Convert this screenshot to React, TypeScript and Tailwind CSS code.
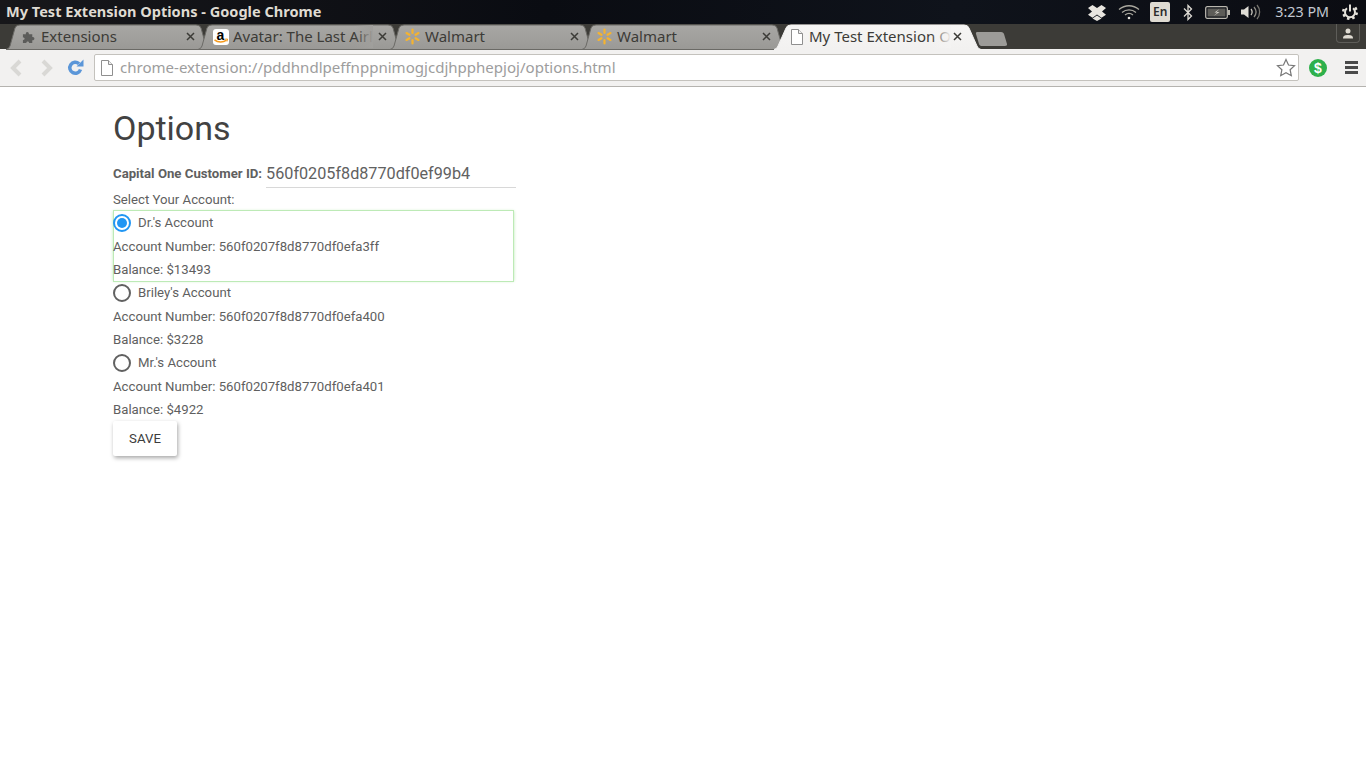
import React from "react";

const ui = { fontFamily: '"Noto Sans", "Open Sans", sans-serif' };
const rb = { fontFamily: 'Roboto, sans-serif' };

function Spark() {
  return (
    <svg width="17" height="17" viewBox="0 0 17 17" className="shrink-0">
      <g fill="#f5b32f">
        {[0, 60, 120, 180, 240, 300].map((a) => (
          <rect key={a} x="7.4" y="0.5" width="2.2" height="5.6" rx="1.1" transform={`rotate(${a} 8.5 8.5)`} />
        ))}
      </g>
    </svg>
  );
}

function Puzzle() {
  return (
    <svg width="14" height="14" viewBox="0 0 15 15" className="shrink-0">
      <path d="M1 4.500h3.200c-.9-2.800 3.400-3.600 3.200 0H11v3c2.700-.8 3.400 3.600 0 3.400V14H7.600c.3-2.400-3.200-2.400-3 0H1v-3.400c2.300.4 2.500-2.900 0-2.600z" fill="#5c5c5a" />
    </svg>
  );
}

function Amazon() {
  return (
    <span className="relative w-[16px] h-[16px] bg-white rounded-[3px] shrink-0 block">
      <span className="absolute left-[4px] top-0 text-[14px] leading-[12px] font-bold text-black" style={{ fontFamily: '"Liberation Sans", sans-serif' }}>a</span>
      <svg width="16" height="16" viewBox="0 0 16 16" className="absolute left-0 top-0">
        <path d="M1.500 10.800c3.500 2.800 8.500 2.800 12 .4" stroke="#f59a1d" strokeWidth="1.500" fill="none" />
        <path d="M12 10.200l2.500-.2-.5 2.500" stroke="#f59a1d" strokeWidth="1" fill="none" />
      </svg>
    </span>
  );
}

function Close() {
  return (
    <svg width="9" height="9" viewBox="0 0 9 9" className="shrink-0">
      <path d="M1 1l7 7M8 1l-7 7" stroke="#3c3b37" strokeWidth="1.500" />
    </svg>
  );
}

function Doc() {
  return (
    <svg width="14" height="16" viewBox="0 0 14 16" className="shrink-0">
      <path d="M1.500.5h7l4 4v11h-11z" fill="#fff" stroke="#8f8f8f" />
      <path d="M8.500.5v4h4" fill="#eee" stroke="#8f8f8f" />
    </svg>
  );
}

function Tab({ width, icon, label, active, fade, fadeColor }: { width: number; icon: React.ReactNode; label: string; active?: boolean; fade?: number; fadeColor?: string }) {
  const s = active ? 11 : 8;
  const L = 1;
  const W = 7 + width;
  const path = `M${L - 3} 25.500 Q${L} 25 ${L + 1} 22 L${L + s - 2} 4 Q${L + s - 1} 1 ${L + s + 3} 1 L${W - s - 3} 1 Q${W - s + 1} 1 ${W - s + 2} 4 L${W - 1} 22 Q${W} 25 ${W + 3} 25.500 Z`;
  const gid = active ? "tabActive" : "tabInactive";
  return (
    <div className="relative h-[25px] shrink-0" style={{ width }}>
      <svg width={W + 4} height="25" viewBox={`0 0 ${W + 4} 25`} className="absolute left-[-7px] top-0 overflow-visible">
        <defs>
          <linearGradient id={gid} x1="0" y1="0" x2="0" y2="1">
            <stop offset="0" stopColor={active ? "#f6f5f4" : "#a8a7a4"} />
            <stop offset="1" stopColor={active ? "#f2f1f0" : "#9a9996"} />
          </linearGradient>
        </defs>
        <path d={path} fill={`url(#${gid})`} stroke={active ? "#f2f1f0" : "#6b6a66"} strokeWidth="1" />
      </svg>
      <div className="relative h-full flex items-center pl-[5px]">
        <span className="w-[17px] flex justify-center shrink-0">{icon}</span>
        <span className="relative ml-[4px] text-[15px] leading-[23px] mb-[1px] whitespace-nowrap text-[#3c3b37]" style={ui}>
          {label}
          {fade && <span className="absolute right-0 top-0 h-full" style={{ width: fade, background: `linear-gradient(90deg, transparent, ${fadeColor})` }} />}
        </span>
        <span className={`absolute top-[8px] flex ${active ? "right-[16px]" : "right-[12px]"}`}><Close /></span>
      </div>
    </div>
  );
}

function Tray() {
  return (
    <div className="flex items-center h-[24px] mr-[8px]">
      <svg width="18" height="17" viewBox="0 0 18 17">
        <path d="M4.500 1L9 4l4.500-3L18 4l-4 3.500 4 3.200-4.500 3L9 10.500l-4.500 3.200L0 10.700l4-3.200L0 4z" fill="#e8e5df" />
        <path d="M4.500 14.500L9 11.500l4.500 3L9 17z" fill="#e8e5df" />
      </svg>
      <svg width="22" height="16" viewBox="0 0 22 16" className="ml-[12px]" fill="none" stroke="#aaa89f" strokeWidth="1.300">
        <path d="M1 5.500c6-5 14-5 20 0" />
        <path d="M4 8.500c4-3.500 10-3.500 14 0" />
        <path d="M7 11c2.500-2 5.500-2 8 0" />
        <circle cx="11" cy="14" r="1.300" fill="#e8e5df" stroke="none" />
      </svg>
      <span className="ml-[10px] w-[20px] h-[20px] bg-[#dfdbd2] rounded-[2px] flex items-center justify-center text-[12px] font-semibold text-[#2c2c2c]" style={ui}>En</span>
      <svg width="10" height="17" viewBox="0 0 10 17" className="ml-[13px]" fill="none" stroke="#e0ddd6" strokeWidth="1.300">
        <path d="M1 4.500l7.500 7.500L5 15.500v-14L8.500 5 1 12.500" />
      </svg>
      <svg width="25" height="13" viewBox="0 0 25 13" className="ml-[12px]">
        <rect x="0.700" y="0.700" width="21.600" height="11.600" rx="1.500" fill="none" stroke="#b9b6ae" strokeWidth="1.300" />
        <rect x="2.500" y="2.500" width="18" height="8" fill="#5d5c58" />
        <rect x="23" y="4" width="2" height="5" fill="#b9b6ae" />
        <path d="M14.500 3l-5 3.500h3L8.500 10l6-4h-3z" fill="#dedbd3" />
      </svg>
      <svg width="20" height="16" viewBox="0 0 20 16" className="ml-[11px]" fill="none">
        <path d="M0 5.500h3L7.500 2v12L3 10.500H0z" fill="#e0ddd6" />
        <path d="M10 5c1.500 2 1.500 4 0 6" stroke="#c9c6be" strokeWidth="1.300" />
        <path d="M13 3c2.500 3 2.500 7 0 10" stroke="#8f8d86" strokeWidth="1.300" />
        <path d="M16 1c3.500 4 3.500 10 0 14" stroke="#77756f" strokeWidth="1.300" />
      </svg>
      <span className="ml-[14px] text-[14.300px] text-[#c3c8d0] whitespace-nowrap" style={ui}>3:23 PM</span>
      <svg width="16" height="16" viewBox="0 0 16 16" className="ml-[13px]" fill="none" stroke="#e4e1da">
        <path d="M8 0.500v7" strokeWidth="2" />
        <path d="M5 4.300a5 5 0 1 0 6 0" strokeWidth="2" />
        {[60, 105, 150, 195, 240, 285].map((a) => (
          <path key={a} d="M8 0v2.500" strokeWidth="2.600" transform={`rotate(${a} 8 8)`} />
        ))}
      </svg>
    </div>
  );
}

function Radio({ on }: { on?: boolean }) {
  return (
    <span className={`w-[18px] h-[18px] rounded-full border-2 flex items-center justify-center shrink-0 ${on ? "border-[#2196f3]" : "border-[#616161]"}`}>
      {on && <span className="w-[10px] h-[10px] rounded-full bg-[#2196f3]" />}
    </span>
  );
}

function Account({ name, num, bal, on }: { name: string; num: string; bal: string; on?: boolean }) {
  return (
    <div className={`w-[401px] h-[70px] text-[13.200px] text-[#5f5f5f] ${on ? "shadow-[inset_1px_0_0_#bdeab6,inset_-1px_0_0_#bdeab6,0_-1px_0_#bdeab6,0_1px_0_#bdeab6,0_0_3px_#bdeab6]" : ""}`} style={rb}>
      <div className="h-[24px] flex items-center">
        <Radio on={on} />
        <span className="ml-[7px]">{name}</span>
      </div>
      <div className="h-[23px] flex items-center">Account Number: {num}</div>
      <div className="h-[23px] flex items-center">Balance: {bal}</div>
    </div>
  );
}

export default function App() {
  return (
    <div className="min-h-[768px] bg-white flex flex-col overflow-hidden">
      <header className="h-[24px] flex items-center justify-between bg-[linear-gradient(90deg,#17171a,#0a0c12_40%,#0f131b_70%,#0b0c12)]">
        <span className="ml-[6px] text-[14.550px] font-bold text-[#dfdbd2] whitespace-nowrap" style={ui}>My Test Extension Options - Google Chrome</span>
        <Tray />
      </header>
      <div className="h-[25px] bg-[#3c3b37] flex pl-[15px] relative">
        <Tab width={192} icon={<Puzzle />} label="Extensions" />
        <Tab width={192} icon={<Amazon />} label="Avatar: The Last Airl" fade={18} fadeColor="#a09f9c" />
        <Tab width={192} icon={<Spark />} label="Walmart" />
        <Tab width={192} icon={<Spark />} label="Walmart" />
        <Tab width={195} active icon={<Doc />} label="My Test Extension O" fade={20} fadeColor="#f4f3f2" />
        <svg width="34" height="17" viewBox="0 0 34 17" className="ml-[-3px] mt-[7px]">
          <path d="M2 1h24c2 0 2.500 1 3 2l3 10c.3 1-.5 2-2 2H7c-1.500 0-2.500-.5-3-2L1 3c-.3-1 0-2 1-2z" fill="#9c9b98" />
        </svg>
        <div className="absolute right-[6px] top-0 w-[24px] h-[19px] border border-t-0 border-[#5e5d59] rounded-b-[4px] flex items-center justify-center">
          <svg width="12" height="11" viewBox="0 0 12 11"><circle cx="6" cy="3" r="2.500" fill="#dfdbd2" /><path d="M1 10.500c0-3 2-3.500 5-3.500s5 .5 5 3.500z" fill="#dfdbd2" /></svg>
        </div>
      </div>
      <div className="h-[38px] bg-[#f2f1f0] border-b border-[#b5b3af] flex items-center">
        <svg width="14" height="18" viewBox="0 0 14 18" className="ml-[9px]" fill="none"><path d="M11 2L4 9l7 7" stroke="#d9d8d5" strokeWidth="4" /></svg>
        <svg width="14" height="18" viewBox="0 0 14 18" className="ml-[17px]" fill="none"><path d="M3 2l7 7-7 7" stroke="#d9d8d5" strokeWidth="4" /></svg>
        <svg width="17" height="17" viewBox="0 0 17 17" className="ml-[13px]" fill="none">
          <path d="M13.500 10.500a5.500 5.500 0 1 1-1.500-5.800" stroke="#5b96d8" strokeWidth="3.500" />
          <path d="M9.500 7.500H16.500V.5z" fill="#5b96d8" />
        </svg>
        <div className="ml-[10px] w-[1205px] h-[27px] bg-white border border-[#c4c2bd] rounded-[2px] flex items-center">
          <span className="ml-[5px] flex"><Doc /></span>
          <span className="ml-[6px] mb-[1px] text-[15.060px] text-[#9d9d9d] whitespace-nowrap" style={ui}>chrome-extension://pddhndlpeffnppnimogjcdjhpphepjoj/options.html</span>
          <svg width="20" height="19" viewBox="0 0 20 19" className="ml-auto mr-[2px]">
            <path d="M10 1.500l2.500 5.500 6 .7-4.400 4 1.200 6L10 14.800l-5.300 2.900 1.200-6-4.400-4 6-.7z" fill="#fff" stroke="#777" strokeWidth="1.200" />
          </svg>
        </div>
        <svg width="18" height="18" viewBox="0 0 18 18" className="ml-[10px]">
          <circle cx="9" cy="9" r="9" fill="#2eb04b" />
          <text x="9" y="14" textAnchor="middle" fontSize="14" fontWeight="700" fill="#fff" fontFamily="Liberation Sans">$</text>
        </svg>
        <div className="ml-[18px] w-[13px] flex flex-col gap-[2px]">
          <span className="h-[3px] bg-[#4a4a4a]" />
          <span className="h-[3px] bg-[#4a4a4a]" />
          <span className="h-[3px] bg-[#4a4a4a]" />
        </div>
      </div>
      <main className="pl-[113px]">
        <h1 className="h-[73px] pt-[20px] text-[34px] leading-[42px] text-[#424242]" style={rb}>Options</h1>
        <div className="flex h-[28px]" style={rb}>
          <span className="text-[13.200px] font-bold leading-[28px] text-[#5f5f5f]">Capital One Customer ID:</span>
          <span className="ml-[4px] w-[250px] h-[28px] border-b border-[#d8d8d8] text-[16.200px] leading-[27px] text-[#616161]">560f0205f8d8770df0ef99b4</span>
        </div>
        <div className="h-[23px] text-[13.200px] leading-[24px] text-[#5f5f5f]" style={rb}>Select Your Account:</div>
        <Account on name="Dr.'s Account" num="560f0207f8d8770df0efa3ff" bal="$13493" />
        <Account name="Briley's Account" num="560f0207f8d8770df0efa400" bal="$3228" />
        <Account name="Mr.'s Account" num="560f0207f8d8770df0efa401" bal="$4922" />
        <button className="block w-[64px] h-[35px] bg-white rounded-[2px] text-[13.200px] text-[#3c3c3c] shadow-[1px_2px_4px_rgba(0,0,0,0.35)]" style={rb}>SAVE</button>
      </main>
    </div>
  );
}
